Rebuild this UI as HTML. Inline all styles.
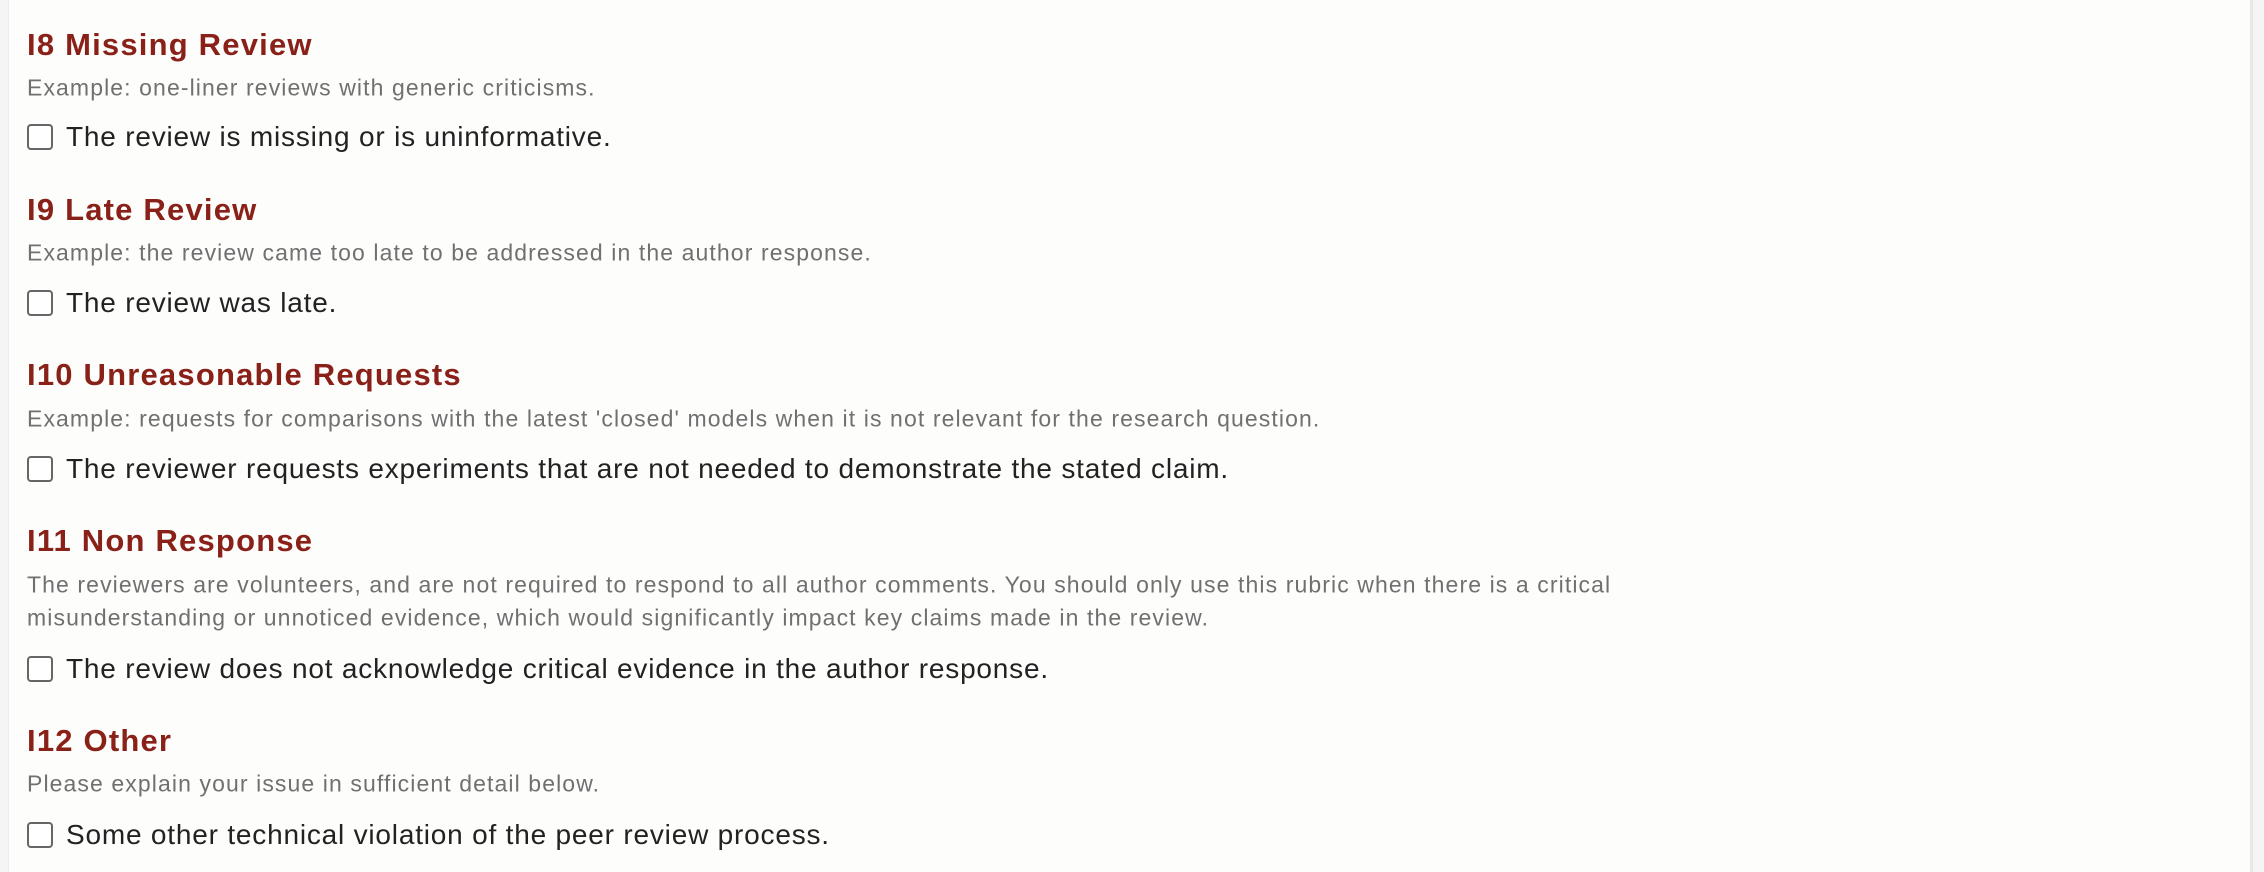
<!DOCTYPE html>
<html><head><meta charset="utf-8"><style>
html,body{margin:0;padding:0;width:2264px;height:872px;overflow:hidden;background:#f5f5f5;font-family:"Liberation Sans",sans-serif;}
.panel{position:absolute;left:8px;top:0;width:2241px;height:872px;background:#fdfdfc;border-right:3px solid #e8e8e8;border-left:1px solid #ececec;}
.t{position:absolute;left:27px;white-space:nowrap;transform:translateY(-50%);}
.h{font-weight:bold;font-size:31px;letter-spacing:1.2px;color:#8a2119;}
.s{font-size:23px;letter-spacing:1.1px;color:#707070;}
.l{font-size:28px;letter-spacing:0.8px;color:#222;left:66px;}
.cb{position:absolute;left:27px;width:22px;height:22px;border:2px solid #666;border-radius:4px;background:#fff;transform:translateY(-50%);}
</style></head><body>
<div class="panel"></div>
<div class="t h" style="top:45px">I8 Missing Review</div>
<div class="t s" style="top:88px">Example: one-liner reviews with generic criticisms.</div>
<div class="cb" style="top:137px"></div><div class="t l" style="top:137px">The review is missing or is uninformative.</div>

<div class="t h" style="top:210px">I9 Late Review</div>
<div class="t s" style="top:253px">Example: the review came too late to be addressed in the author response.</div>
<div class="cb" style="top:303px"></div><div class="t l" style="top:303px">The review was late.</div>

<div class="t h" style="top:375px">I10 Unreasonable Requests</div>
<div class="t s" style="top:419px">Example: requests for comparisons with the latest 'closed' models when it is not relevant for the research question.</div>
<div class="cb" style="top:469px"></div><div class="t l" style="top:469px">The reviewer requests experiments that are not needed to demonstrate the stated claim.</div>

<div class="t h" style="top:541px">I11 Non Response</div>
<div class="t s" style="top:585px">The reviewers are volunteers, and are not required to respond to all author comments. You should only use this rubric when there is a critical</div>
<div class="t s" style="top:618px">misunderstanding or unnoticed evidence, which would significantly impact key claims made in the review.</div>
<div class="cb" style="top:669px"></div><div class="t l" style="top:669px">The review does not acknowledge critical evidence in the author response.</div>

<div class="t h" style="top:741px">I12 Other</div>
<div class="t s" style="top:784px">Please explain your issue in sufficient detail below.</div>
<div class="cb" style="top:835px"></div><div class="t l" style="top:835px">Some other technical violation of the peer review process.</div>
</body></html>
